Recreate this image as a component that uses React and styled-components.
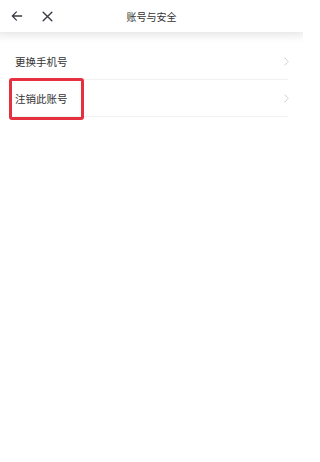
import { createGlobalStyle } from "styled-components";
import styled from "styled-components";

const GlobalStyle = createGlobalStyle`
  html, body {
    margin: 0;
    padding: 0;
    background: #ffffff;
  }
  body {
    font-family: "Noto Sans CJK SC", "Noto Sans", sans-serif;
    color: #333333;
  }
`;

const Page = styled.div`
  width: 303px;
  height: 462px;
  background: #ffffff;
  overflow: hidden;
`;

const Header = styled.div`
  position: relative;
  height: 32px;
  display: flex;
  align-items: center;
  padding: 0 8px;
  background: #ffffff;
  box-shadow: 0 2px 8px rgba(0, 0, 0, 0.06);
  z-index: 1;
`;

const NavButton = styled.span`
  width: 18px;
  height: 18px;
  display: flex;
  align-items: center;
  justify-content: center;
  margin-right: ${(p) => p.gap || 0}px;
  color: #3a3d45;
`;

const Title = styled.div`
  position: absolute;
  left: 0;
  right: 0;
  text-align: center;
  font-size: 10px;
  color: #333333;
  pointer-events: none;
`;

const Shade = styled.div`
  height: 11px;
  background: linear-gradient(#f4f4f4, #ffffff);
`;

const List = styled.div`
  padding-left: 15px;
  padding-right: 15px;
`;

const Row = styled.div`
  position: relative;
  height: 36px;
  display: flex;
  align-items: center;
  justify-content: space-between;
  border-bottom: 1px solid #f1f1f1;
  font-size: 10.5px;
  color: #333333;
`;

const Chevron = styled.span`
  display: flex;
  color: #d0d0d0;
  margin-right: -1px;
`;

const Highlight = styled.div`
  position: absolute;
  left: -6px;
  top: -2px;
  width: 69px;
  height: 36px;
  border: 3px solid #e5303f;
  border-radius: 3px;
`;

const BackIcon = () => (
  <svg width="14" height="14" viewBox="0 0 24 24" fill="none" stroke="currentColor" strokeWidth="2.2" strokeLinecap="round" strokeLinejoin="round">
    <path d="M20 12H4M11 5l-7 7 7 7" />
  </svg>
);

const CloseIcon = () => (
  <svg width="13" height="13" viewBox="0 0 24 24" fill="none" stroke="currentColor" strokeWidth="2.6" strokeLinecap="round">
    <path d="M4 4l16 16M20 4L4 20" />
  </svg>
);

const ChevronIcon = () => (
  <svg width="5" height="9" viewBox="0 0 5 9" fill="none" stroke="currentColor" strokeWidth="1" strokeLinecap="round" strokeLinejoin="round">
    <path d="M0.8 0.8L4.2 4.5L0.8 8.2" />
  </svg>
);

const items = [
  { label: "更换手机号" },
  { label: "注销此账号", marked: true },
];

export default function App() {
  return (
    <Page>
      <GlobalStyle />
      <Header>
        <NavButton gap={12}>
          <BackIcon />
        </NavButton>
        <NavButton>
          <CloseIcon />
        </NavButton>
        <Title>账号与安全</Title>
      </Header>
      <Shade />
      <List>
        {items.map((it) => (
          <Row key={it.label}>
            <span>{it.label}</span>
            <Chevron>
              <ChevronIcon />
            </Chevron>
            {it.marked && <Highlight />}
          </Row>
        ))}
      </List>
    </Page>
  );
}
